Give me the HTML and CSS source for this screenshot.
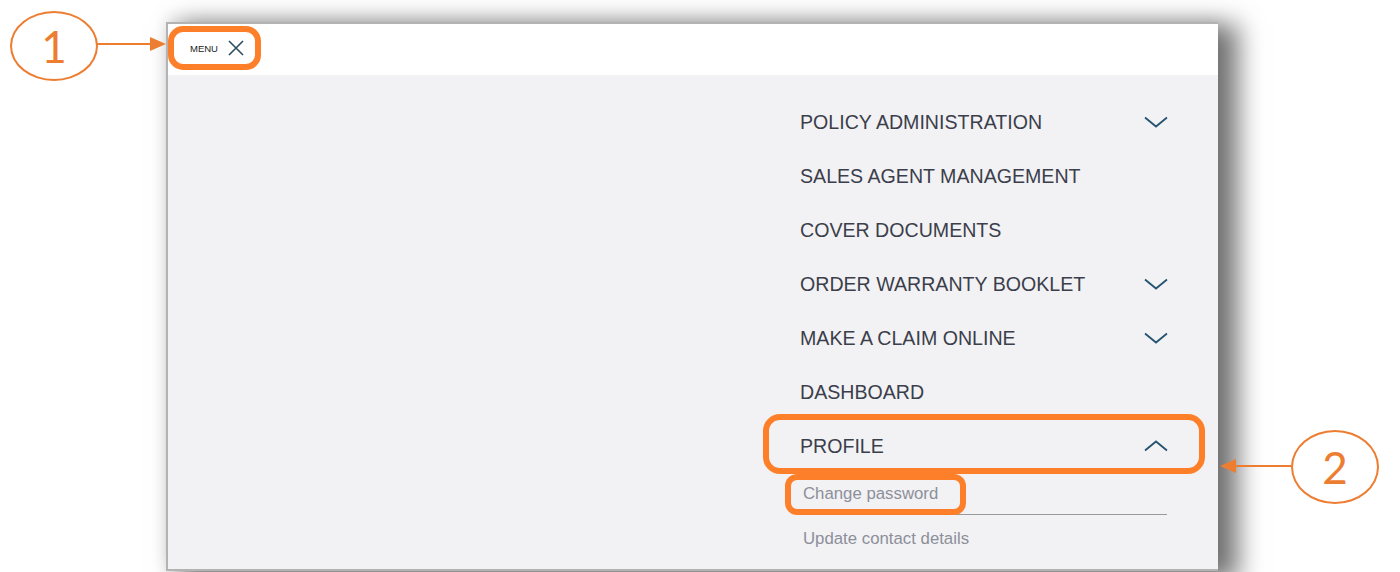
FILE: index.html
```html
<!DOCTYPE html>
<html lang="en">
<head>
<meta charset="utf-8">
<title>Menu</title>
<link rel="stylesheet" href="styles.css">
</head>
<body>
<div class="stage">
  <div class="window">
    <header class="topbar">
      <button class="menu-btn" type="button">
        <span class="menu-label">MENU</span>
        <svg class="close-icon" width="16" height="16" viewBox="0 0 16 16" aria-hidden="true">
          <path d="M1 1 L15 15 M15 1 L1 15" stroke="#2d4f63" stroke-width="1.6" fill="none"/>
        </svg>
        <span class="mark mark-menu"></span>
      </button>
    </header>
    <div class="panel">
      <nav class="nav">
        <div class="nav-item">
          <span>POLICY ADMINISTRATION</span>
          <svg class="chev" width="24" height="12" viewBox="0 0 24 12"><path d="M1 1.5 L12 10.5 L23 1.5" /></svg>
        </div>
        <div class="nav-item"><span>SALES AGENT MANAGEMENT</span></div>
        <div class="nav-item"><span>COVER DOCUMENTS</span></div>
        <div class="nav-item">
          <span>ORDER WARRANTY BOOKLET</span>
          <svg class="chev" width="24" height="12" viewBox="0 0 24 12"><path d="M1 1.5 L12 10.5 L23 1.5" /></svg>
        </div>
        <div class="nav-item">
          <span>MAKE A CLAIM ONLINE</span>
          <svg class="chev" width="24" height="12" viewBox="0 0 24 12"><path d="M1 1.5 L12 10.5 L23 1.5" /></svg>
        </div>
        <div class="nav-item"><span>DASHBOARD</span></div>
        <div class="nav-item open">
          <span>PROFILE</span>
          <svg class="chev" width="24" height="12" viewBox="0 0 24 12"><path d="M1 10.5 L12 1.5 L23 10.5" /></svg>
          <span class="mark mark-profile"></span>
        </div>
        <div class="sub">
          <div class="sub-item first">
            <span>Change password</span>
            <span class="mark mark-password"></span>
          </div>
          <div class="sub-item last"><span>Update contact details</span></div>
        </div>
      </nav>
    </div>
  </div>

  <div class="callout callout-1"><span>1</span></div>
  <div class="callout callout-2"><span>2</span></div>
  <svg class="arrows" width="1400" height="572" viewBox="0 0 1400 572" aria-hidden="true">
    <line x1="97" y1="44" x2="152" y2="44" stroke="#ed7d31" stroke-width="2"/>
    <polygon points="150,37 166,44 150,51" fill="#ed7d31"/>
    <line x1="1292" y1="466" x2="1234" y2="466" stroke="#ed7d31" stroke-width="2"/>
    <polygon points="1236,459 1220,466 1236,473" fill="#ed7d31"/>
  </svg>
</div>
</body>
</html>
```

FILE: styles.css
```css
* {
  box-sizing: border-box;
}

html, body {
  margin: 0;
  padding: 0;
  background: #ffffff;
  font-family: "Liberation Sans", Arial, sans-serif;
}

.stage {
  position: relative;
  width: 1400px;
  height: 572px;
  overflow: hidden;
  padding: 22px 0 0 166px;
}

.window {
  width: 1052px;
  height: 549px;
  border: 2px solid #b3b3b3;
  border-right: none;
  background: #f2f2f4;
  display: flex;
  flex-direction: column;
  box-shadow: 16px 6px 24px 4px rgba(0, 0, 0, 0.55), 0 -6px 14px rgba(0, 0, 0, 0.05);
}

.topbar {
  height: 51px;
  background: #ffffff;
  display: flex;
  align-items: flex-start;
  padding: 7px 0 0 8px;
}

.menu-btn {
  position: relative;
  display: flex;
  align-items: center;
  gap: 10px;
  height: 34px;
  padding: 0 0 0 14px;
  margin: 0;
  width: 83px;
  border: none;
  background: #ffffff;
  border-radius: 10px;
  font-family: inherit;
}

.menu-label {
  font-size: 9.5px;
  color: #222;
}

.close-icon {
  display: block;
}

.panel {
  flex: 1;
  display: flex;
  justify-content: flex-end;
  padding: 20px 51px 0 0;
}

.nav {
  width: 367px;
  display: flex;
  flex-direction: column;
}

.nav-item {
  position: relative;
  height: 54px;
  display: flex;
  align-items: center;
  justify-content: space-between;
  font-size: 19.6px;
  color: #3b3e4b;
}

.chev {
  display: block;
  margin-right: -1px;
}

.chev path {
  fill: none;
  stroke: #23536f;
  stroke-width: 1.8;
}

.sub {
  display: flex;
  flex-direction: column;
}

.sub-item {
  position: relative;
  height: 44px;
  display: flex;
  align-items: center;
  padding-left: 3px;
  font-size: 16.8px;
  color: #8c8f9a;
}

.sub-item.first {
  height: 42px;
  border-bottom: 1px solid #9a9a9a;
}

.sub-item.last {
  height: 48px;
}

/* orange highlight marks */
.mark {
  position: absolute;
  border: 6px solid #fd7f29;
  pointer-events: none;
}

.mark-menu {
  left: -8px;
  top: -5px;
  width: 93px;
  height: 44px;
  border-radius: 15px;
}

.mark-profile {
  left: -37px;
  right: -38px;
  top: -5px;
  bottom: -1px;
  border-radius: 17px;
}

.mark-password {
  left: -15px;
  top: 1px;
  width: 181px;
  height: 41px;
  border-radius: 12px;
}

/* numbered callouts */
.callout {
  position: absolute;
  border: 2px solid #ed7d31;
  border-radius: 50%;
  display: flex;
  align-items: center;
  justify-content: center;
  font-family: Lato, "Open Sans", sans-serif;
  font-size: 44px;
  color: #ed7d31;
  background: #ffffff;
}

.callout-1 {
  left: 10px;
  top: 11px;
  width: 88px;
  height: 70px;
}

.callout-2 {
  left: 1291px;
  top: 430px;
  width: 88px;
  height: 74px;
}

.arrows {
  position: absolute;
  left: 0;
  top: 0;
  pointer-events: none;
}
```
